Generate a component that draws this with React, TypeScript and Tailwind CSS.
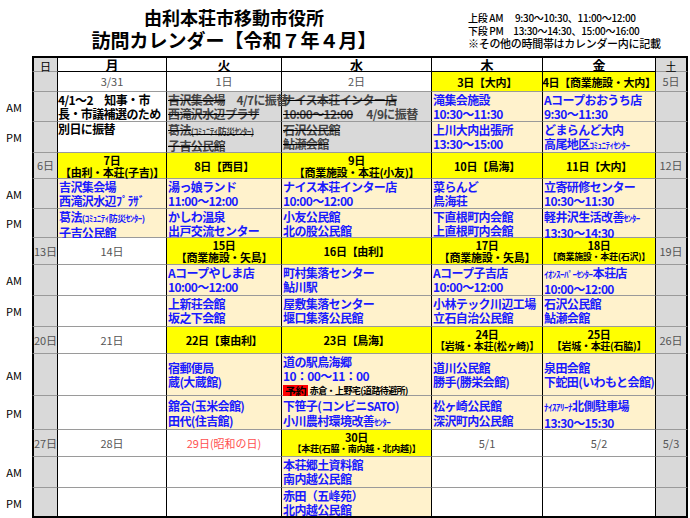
import React from "react";

const F = { fontFamily: '"Noto Sans CJK JP", "Noto Sans", sans-serif' };

type K = "g" | "w" | "y" | "c" | "x" | "d";
const base: Record<K, string> = {
  g: "bg-[#d9d9d9]",
  w: "bg-white",
  y: "bg-[#ffff00] text-black font-bold text-center text-[11px] leading-[12px] tracking-[-0.3px] flex flex-col items-center justify-center",
  c: "bg-[#fff2cc] text-[#1a1aff] font-bold text-[12px] leading-[14px] tracking-[-0.6px] px-[1px] pt-[1px]",
  x: "bg-[#d9d9d9] text-[#444] font-bold text-[12px] leading-[14px] tracking-[-0.6px] px-[1px] pt-[1px]",
  d: "bg-white text-[#555] text-[11px] flex items-center justify-center",
};

function C({ k, children, extra = "" }: { k: K; children?: React.ReactNode; extra?: string }) {
  return (
    <div className={`${base[k]} border-r border-b border-r-black border-b-[#9a9a9a] overflow-visible whitespace-nowrap relative ${extra}`}>
      {children}
    </div>
  );
}
const L = ({ t }: { t: string }) => (
  <div className="flex items-center justify-center text-[11px] text-black pr-[4px]">{t}</div>
);
const S = ({ children }: { children: React.ReactNode }) => <span className="line-through decoration-black">{children}</span>;
const sm = "text-[9px] tracking-[-0.5px]";

export default function App() {
  return (
    <div className="w-[690px] h-[518px] bg-white relative overflow-hidden" style={F}>
      <div className="flex h-[56px]">
        <div className="w-[468px] flex flex-col items-center font-bold text-black pt-[6px]">
          <div className="text-[18px] leading-[22px]">由利本荘市移動市役所</div>
          <div className="text-[19px] leading-[24px]">訪問カレンダー【令和７年４月】</div>
        </div>
        <div className="text-[10px] leading-[13px] text-black pt-[11px] font-medium tracking-[-0.3px]">
          <div>上段 AM　 9:30～10:30、11:00～12:00</div>
          <div>下段 PM　13:30～14:30、15:00～16:00</div>
          <div className="text-[11px]">※その他の時間帯はカレンダー内に記載</div>
        </div>
      </div>
      <div
        className="grid grid-cols-[32px_26px_109px_115px_150px_111px_113px_32px] grid-rows-[16px_20px_30px_31px_26px_30px_29px_27px_31px_31px_27px_42px_34px_27px_31px_30px]"
      >
        {/* header */}
        <div />
        <C k="g" extra="text-[11px] text-center leading-[16px] border-l-2 border-l-black border-t-2 border-t-black">日</C>
        {["月", "火", "水", "木", "金"].map((d) => (
          <C key={d} k="w" extra="text-[13px] font-bold text-center leading-[14px] border-t-2 border-t-black border-b-black">{d}</C>
        ))}
        <C k="g" extra="text-[11px] text-center leading-[16px] border-t-2 border-t-black border-r-2">土</C>

        {/* week1 */}
        <div />
        <C k="g" extra="border-l-2 border-l-black" />
        <C k="d">3/31</C><C k="d">1日</C><C k="d">2日</C>
        <C k="y">3日【大内】</C><C k="y">4日【商業施設・大内】</C>
        <C k="g" extra="text-[11px] text-[#555] flex items-center justify-center border-r-2">5日</C>
        <L t="AM" />
        <C k="g" extra="border-l-2 border-l-black" />
        <C k="w" extra="text-black font-bold text-[12px] leading-[14px] tracking-[-0.6px] pt-[1px]"><div>4/1～2　知事・市</div><div>長・市議補選のため</div></C>
        <C k="x" extra="z-10"><div><S>吉沢集会場</S>　4/7に振替</div><div><S>西滝沢水辺プラザ</S></div></C>
        <C k="x"><div><S>ナイス本荘インター店</S></div><div><S>10:00～12:00</S>　 4/9に振替</div></C>
        <C k="c"><div>滝集会施設</div><div>10:30～11:30</div></C>
        <C k="c"><div>Aコープおおうち店</div><div>9:30～11:30</div></C>
        <C k="g" extra="border-r-2" />
        <L t="PM" />
        <C k="g" extra="border-l-2 border-l-black" />
        <C k="w" extra="text-black font-bold text-[12px] leading-[14px] tracking-[-0.6px]">別日に振替</C>
        <C k="x"><div><S>葛法<span className={sm}>(ｺﾐｭﾆﾃｨ防災ｾﾝﾀｰ)</span></S></div><div><S>子吉公民館</S></div></C>
        <C k="x"><div><S>石沢公民館</S></div><div><S>鮎瀬会館</S></div></C>
        <C k="c"><div>上川大内出張所</div><div>13:30～15:00</div></C>
        <C k="c"><div>どまらんど大内</div><div>高尾地区<span className={sm}>ｺﾐｭﾆﾃｨｾﾝﾀｰ</span></div></C>
        <C k="g" extra="border-r-2" />

        {/* week2 */}
        <div />
        <C k="g" extra="text-[11px] text-[#555] flex items-center justify-center border-l-2 border-l-black">6日</C>
        <C k="y"><div>7日</div><div>【由利・本荘(子吉)】</div></C>
        <C k="y">8日【西目】</C>
        <C k="y"><div>9日</div><div>【商業施設・本荘(小友)】</div></C>
        <C k="y">10日【鳥海】</C>
        <C k="y">11日【大内】</C>
        <C k="g" extra="text-[11px] text-[#555] flex items-center justify-center border-r-2">12日</C>
        <L t="AM" />
        <C k="g" extra="border-l-2 border-l-black" />
        <C k="c"><div>吉沢集会場</div><div>西滝沢水辺ﾌﾟﾗｻﾞ</div></C>
        <C k="c"><div>湯っ娘ランド</div><div>11:00～12:00</div></C>
        <C k="c"><div>ナイス本荘インター店</div><div>10:00～12:00</div></C>
        <C k="c"><div>菜らんど</div><div>鳥海荘</div></C>
        <C k="c"><div>立寄研修センター</div><div>10:30～11:30</div></C>
        <C k="g" extra="border-r-2" />
        <L t="PM" />
        <C k="g" extra="border-l-2 border-l-black" />
        <C k="c"><div>葛法<span className={sm}>(ｺﾐｭﾆﾃｨ防災ｾﾝﾀｰ)</span></div><div>子吉公民館</div></C>
        <C k="c"><div>かしわ温泉</div><div>出戸交流センター</div></C>
        <C k="c"><div>小友公民館</div><div>北の股公民館</div></C>
        <C k="c"><div>下直根町内会館</div><div>上直根町内会館</div></C>
        <C k="c"><div>軽井沢生活改善<span className={sm}>ｾﾝﾀｰ</span></div><div>13:30～14:30</div></C>
        <C k="g" extra="border-r-2" />

        {/* week3 */}
        <div />
        <C k="g" extra="text-[11px] text-[#555] flex items-center justify-center border-l-2 border-l-black">13日</C>
        <C k="d">14日</C>
        <C k="y"><div>15日</div><div>【商業施設・矢島】</div></C>
        <C k="y">16日【由利】</C>
        <C k="y"><div>17日</div><div>【商業施設・矢島】</div></C>
        <C k="y"><div>18日</div><div className="text-[9px]">【商業施設・本荘(石沢)】</div></C>
        <C k="g" extra="text-[11px] text-[#555] flex items-center justify-center border-r-2">19日</C>
        <L t="AM" />
        <C k="g" extra="border-l-2 border-l-black" />
        <C k="w" />
        <C k="c"><div>Aコープやしま店</div><div>10:00～12:00</div></C>
        <C k="c"><div>町村集落センター</div><div>鮎川駅</div></C>
        <C k="c"><div>Aコープ子吉店</div><div>10:00～12:00</div></C>
        <C k="c"><div><span className={sm}>ｲｵﾝｽｰﾊﾟｰｾﾝﾀｰ</span>本荘店</div><div>10:00～12:00</div></C>
        <C k="g" extra="border-r-2" />
        <L t="PM" />
        <C k="g" extra="border-l-2 border-l-black" />
        <C k="w" />
        <C k="c"><div>上新荘会館</div><div>坂之下会館</div></C>
        <C k="c"><div>屋敷集落センター</div><div>堰口集落公民館</div></C>
        <C k="c"><div>小林テック川辺工場</div><div>立石自治公民館</div></C>
        <C k="c"><div>石沢公民館</div><div>鮎瀬会館</div></C>
        <C k="g" extra="border-r-2" />

        {/* week4 */}
        <div />
        <C k="g" extra="text-[11px] text-[#555] flex items-center justify-center border-l-2 border-l-black">20日</C>
        <C k="d">21日</C>
        <C k="y">22日【東由利】</C>
        <C k="y">23日【鳥海】</C>
        <C k="y"><div>24日</div><div className="text-[10px]">【岩城・本荘(松ヶ崎)】</div></C>
        <C k="y"><div>25日</div><div className="text-[10px]">【岩城・本荘(石脇)】</div></C>
        <C k="g" extra="text-[11px] text-[#555] flex items-center justify-center border-r-2">26日</C>
        <L t="AM" />
        <C k="g" extra="border-l-2 border-l-black" />
        <C k="w" />
        <C k="c" extra="flex flex-col justify-center text-[11px]"><div>宿郵便局</div><div>蔵(大蔵館)</div></C>
        <C k="c" extra="text-[11px] leading-[13px]"><div>道の駅鳥海郷</div><div className="text-[12px]">10：00～11：00</div><div className="text-black text-[9px] flex items-center gap-[2px] mt-[1px]"><span className="bg-[#ff0000] px-[2px] text-[11px] leading-[13px]">予約</span>赤倉・上野宅(道路待避所)</div></C>
        <C k="c" extra="flex flex-col justify-center text-[11px]"><div>道川公民館</div><div>勝手(勝栄会館)</div></C>
        <C k="c" extra="flex flex-col justify-center text-[11px]"><div>泉田会館</div><div>下蛇田(いわもと会館)</div></C>
        <C k="g" extra="border-r-2" />
        <L t="PM" />
        <C k="g" extra="border-l-2 border-l-black" />
        <C k="w" />
        <C k="c" extra="text-[11px] leading-[15px] pt-[2px]"><div>舘合(玉米会館)</div><div>田代(住吉館)</div></C>
        <C k="c" extra="text-[11px] leading-[15px] pt-[2px]"><div>下笹子(コンビニSATO)</div><div>小川農村環境改善<span className={sm}>ｾﾝﾀｰ</span></div></C>
        <C k="c" extra="text-[11px] leading-[15px] pt-[2px]"><div>松ヶ崎公民館</div><div>深沢町内公民館</div></C>
        <C k="c" extra="leading-[15px] pt-[2px]"><div><span className={sm}>ﾅｲｽｱﾘｰﾅ</span>北側駐車場</div><div>13:30～15:30</div></C>
        <C k="g" extra="border-r-2" />

        {/* week5 */}
        <div />
        <C k="g" extra="text-[11px] text-[#555] flex items-center justify-center border-l-2 border-l-black">27日</C>
        <C k="d">28日</C>
        <C k="d" extra="text-[#ff5050]">29日(昭和の日)</C>
        <C k="y"><div>30日</div><div className="text-[9px]">【本荘(石脇・南内越・北内越)】</div></C>
        <C k="d">5/1</C>
        <C k="d">5/2</C>
        <C k="g" extra="text-[11px] text-[#555] flex items-center justify-center border-r-2">5/3</C>
        <L t="AM" />
        <C k="g" extra="border-l-2 border-l-black" />
        <C k="w" /><C k="w" />
        <C k="c"><div>本荘郷土資料館</div><div>南内越公民館</div></C>
        <C k="w" /><C k="w" />
        <C k="g" extra="border-r-2" />
        <L t="PM" />
        <C k="g" extra="border-l-2 border-l-black border-b-2 border-b-black" />
        <C k="w" extra="border-b-2 border-b-black" /><C k="w" extra="border-b-2 border-b-black" />
        <C k="c" extra="border-b-2 border-b-black"><div>赤田（五峰苑）</div><div>北内越公民館</div></C>
        <C k="w" extra="border-b-2 border-b-black" /><C k="w" extra="border-b-2 border-b-black" />
        <C k="g" extra="border-r-2 border-b-2 border-b-black" />
      </div>
    </div>
  );
}
